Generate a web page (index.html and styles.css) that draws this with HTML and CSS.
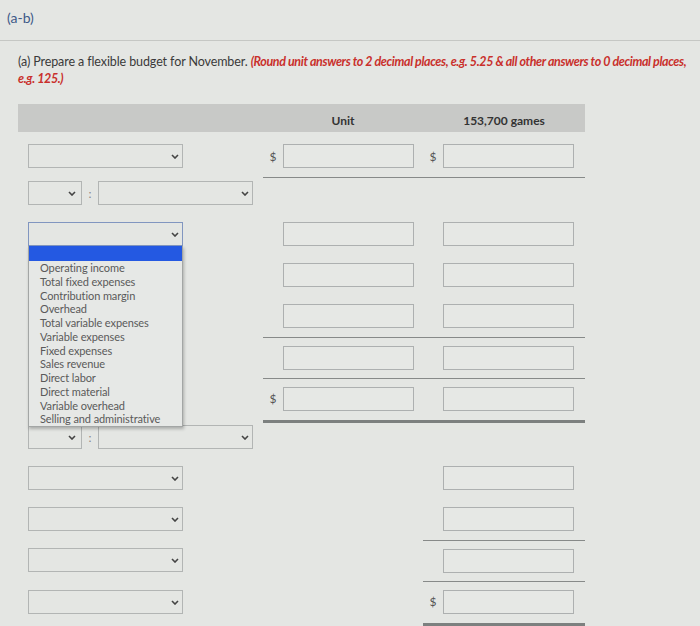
FILE: index.html
```html
<!DOCTYPE html>
<html lang="en">
<head>
    <meta charset="UTF-8">
    <title>(a-b) Flexible budget</title>
    <link rel="stylesheet" href="styles.css">
</head>
<body>
    <div class="part-title">(a-b)</div>

    <p class="question">
        (a) Prepare a flexible budget for November.
        <span class="note">(Round unit answers to 2 decimal places, e.g. 5.25 &amp; all other answers to 0 decimal places, e.g. 125.)</span>
    </p>

    <table class="budget">
        <colgroup>
            <col class="c-label">
            <col class="c-unit">
            <col class="c-total">
        </colgroup>
        <thead>
            <tr>
                <th></th>
                <th>Unit</th>
                <th>153,700 games</th>
            </tr>
        </thead>
        <tbody>
            <tr class="first">
                <td><div class="select"><svg class="chev" viewBox="0 0 8 5"><path d="M1 1l3 3 3-3"/></svg></div></td>
                <td class="line"><div class="amount"><span class="cur">$</span><input type="text"></div></td>
                <td class="line"><div class="amount"><span class="cur">$</span><input type="text"></div></td>
            </tr>
            <tr class="combo">
                <td>
                    <div class="pair">
                        <div class="select small"><svg class="chev" viewBox="0 0 8 5"><path d="M1 1l3 3 3-3"/></svg></div>
                        <span class="colon">:</span>
                        <div class="select"><svg class="chev" viewBox="0 0 8 5"><path d="M1 1l3 3 3-3"/></svg></div>
                    </div>
                </td>
                <td></td>
                <td></td>
            </tr>
            <tr>
                <td>
                    <div class="dropdown-wrap">
                        <div class="select open"><svg class="chev" viewBox="0 0 8 5"><path d="M1 1l3 3 3-3"/></svg></div>
                        <ul class="options">
                            <li class="picked"></li>
                            <li>Operating income</li>
                            <li>Total fixed expenses</li>
                            <li>Contribution margin</li>
                            <li>Overhead</li>
                            <li>Total variable expenses</li>
                            <li>Variable expenses</li>
                            <li>Fixed expenses</li>
                            <li>Sales revenue</li>
                            <li>Direct labor</li>
                            <li>Direct material</li>
                            <li>Variable overhead</li>
                            <li>Selling and administrative</li>
                        </ul>
                    </div>
                </td>
                <td><div class="amount"><span class="cur"></span><input type="text"></div></td>
                <td><div class="amount"><span class="cur"></span><input type="text"></div></td>
            </tr>
            <tr>
                <td><div class="select"><svg class="chev" viewBox="0 0 8 5"><path d="M1 1l3 3 3-3"/></svg></div></td>
                <td><div class="amount"><span class="cur"></span><input type="text"></div></td>
                <td><div class="amount"><span class="cur"></span><input type="text"></div></td>
            </tr>
            <tr>
                <td><div class="select"><svg class="chev" viewBox="0 0 8 5"><path d="M1 1l3 3 3-3"/></svg></div></td>
                <td class="line"><div class="amount"><span class="cur"></span><input type="text"></div></td>
                <td class="line"><div class="amount"><span class="cur"></span><input type="text"></div></td>
            </tr>
            <tr>
                <td><div class="select"><svg class="chev" viewBox="0 0 8 5"><path d="M1 1l3 3 3-3"/></svg></div></td>
                <td class="line"><div class="amount"><span class="cur"></span><input type="text"></div></td>
                <td class="line"><div class="amount"><span class="cur"></span><input type="text"></div></td>
            </tr>
            <tr>
                <td><div class="select"><svg class="chev" viewBox="0 0 8 5"><path d="M1 1l3 3 3-3"/></svg></div></td>
                <td class="thick"><div class="amount"><span class="cur">$</span><input type="text"></div></td>
                <td class="thick"><div class="amount"><span class="cur"></span><input type="text"></div></td>
            </tr>
            <tr class="combo">
                <td>
                    <div class="pair">
                        <div class="select small"><svg class="chev" viewBox="0 0 8 5"><path d="M1 1l3 3 3-3"/></svg></div>
                        <span class="colon">:</span>
                        <div class="select"><svg class="chev" viewBox="0 0 8 5"><path d="M1 1l3 3 3-3"/></svg></div>
                    </div>
                </td>
                <td></td>
                <td></td>
            </tr>
            <tr>
                <td><div class="select"><svg class="chev" viewBox="0 0 8 5"><path d="M1 1l3 3 3-3"/></svg></div></td>
                <td></td>
                <td><div class="amount"><span class="cur"></span><input type="text"></div></td>
            </tr>
            <tr>
                <td><div class="select"><svg class="chev" viewBox="0 0 8 5"><path d="M1 1l3 3 3-3"/></svg></div></td>
                <td></td>
                <td class="line"><div class="amount"><span class="cur"></span><input type="text"></div></td>
            </tr>
            <tr>
                <td><div class="select"><svg class="chev" viewBox="0 0 8 5"><path d="M1 1l3 3 3-3"/></svg></div></td>
                <td></td>
                <td class="line"><div class="amount"><span class="cur"></span><input type="text"></div></td>
            </tr>
            <tr>
                <td><div class="select"><svg class="chev" viewBox="0 0 8 5"><path d="M1 1l3 3 3-3"/></svg></div></td>
                <td></td>
                <td class="thick"><div class="amount"><span class="cur">$</span><input type="text"></div></td>
            </tr>
        </tbody>
    </table>
</body>
</html>
```

FILE: styles.css
```css
* {
    box-sizing: border-box;
}

body {
    margin: 0;
    background: #e4e6e3;
    font-family: Lato, "Open Sans", sans-serif;
    color: #3a3a3a;
}

.part-title {
    height: 41px;
    padding: 9px 7px 0;
    font-size: 14px;
    color: #3e5a88;
    border-bottom: 1px solid #c5c7c4;
}

.question {
    margin: 0;
    padding: 12px 4px 0 18px;
    font-size: 12.5px;
    line-height: 17px;
    letter-spacing: -0.1px;
}

.note {
    color: #c9302c;
    font-weight: 700;
    font-style: italic;
    letter-spacing: -0.38px;
}

.budget {
    margin: 17px 0 0 18px;
    width: 567px;
    border-collapse: collapse;
    table-layout: fixed;
}

.c-label { width: 245px; }
.c-unit { width: 160px; }
.c-total { width: 162px; }

.budget th {
    height: 28px;
    padding: 4px 0 0;
    background: #c8c9c7;
    font-size: 12px;
    font-weight: 700;
    color: #333;
    text-align: center;
}

.budget td {
    padding: 8px 0 9px;
    vertical-align: middle;
}

.budget tr.first td {
    padding-top: 12px;
}

.budget tr.combo td {
    padding-top: 4px;
}

.budget td:first-child {
    padding-left: 10px;
}

.budget td.line {
    padding-bottom: 8px;
    border-bottom: 1px solid #878a89;
}

.budget td.thick {
    border-bottom: 3px solid #7c807f;
}

.select {
    width: 155px;
    height: 24px;
    border: 1px solid #b2b5b4;
    display: flex;
    align-items: center;
    justify-content: flex-end;
    padding-right: 3px;
}

.select.small {
    width: 54px;
    padding-right: 5px;
}

.select.open {
    border-color: #8196c0;
}

.chev {
    width: 8px;
    height: 5px;
    fill: none;
    stroke: #444;
    stroke-width: 1.6;
}

.pair {
    display: flex;
    align-items: center;
}

.colon {
    width: 16px;
    text-align: center;
    font-size: 12px;
    color: #888;
}

.dropdown-wrap {
    position: relative;
}

.options {
    position: absolute;
    top: 24px;
    left: 0;
    z-index: 2;
    width: 155px;
    margin: 0;
    padding: 0;
    list-style: none;
    background: #e6e8e6;
    border: 1px solid #a3a6a5;
    border-top: none;
    box-shadow: 1px 2px 3px rgba(0, 0, 0, 0.25);
}

.options li {
    height: 13.75px;
    line-height: 13.75px;
    padding-left: 11px;
    font-size: 11px;
    color: #5a5a5a;
    letter-spacing: -0.1px;
    white-space: nowrap;
}

.options li.picked {
    height: 15px;
    background: #2459e2;
}

.amount {
    display: flex;
    align-items: center;
}

.cur {
    width: 20px;
    text-align: center;
    font-size: 12px;
    color: #555;
}

.amount input {
    width: 131px;
    height: 24px;
    margin: 0;
    border: 1px solid #adb0b0;
    background: #e6e8e5;
    font: inherit;
}
```
